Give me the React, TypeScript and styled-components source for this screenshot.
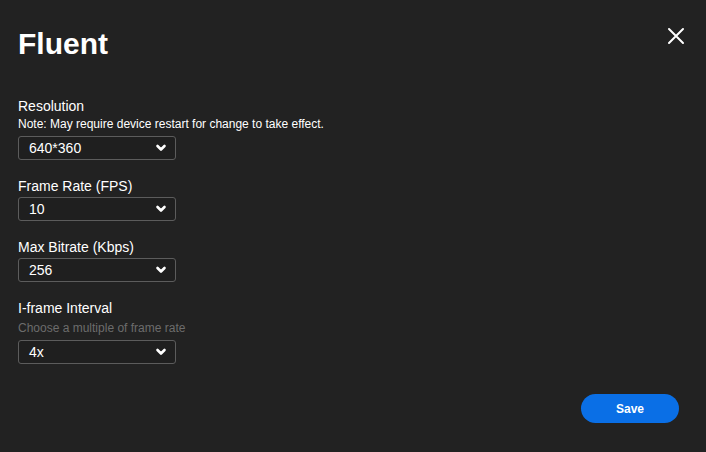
import { FC } from "react";
import styled, { createGlobalStyle } from "styled-components";

const GlobalStyle = createGlobalStyle`
  html, body {
    margin: 0;
    padding: 0;
    background-color: #222222;
  }
  body {
    font-family: "Liberation Sans", Arial, sans-serif;
    color: white;
  }
`;

const Dialog = styled.div`
  position: relative;
  width: 706px;
  height: 452px;
  box-sizing: border-box;
  padding: 26px 27px 0 18px;
  display: flex;
  flex-direction: column;
`;

const Title = styled.h1`
  margin: 0;
  font-size: 30px;
  line-height: 36px;
  font-weight: bold;
`;

const CloseButton = styled.button`
  position: absolute;
  top: 26px;
  right: 20px;
  width: 20px;
  height: 20px;
  padding: 0;
  background: none;
  border: none;
  display: flex;
  align-items: center;
  justify-content: center;
  cursor: pointer;
`;

const Form = styled.div`
  margin-top: 36px;
  display: flex;
  flex-direction: column;
  gap: 18px;
`;

const Field = styled.div`
  display: flex;
  flex-direction: column;
`;

const Label = styled.div`
  font-size: 14px;
  line-height: 16px;
  margin-bottom: 3px;
`;

const Hint = styled.div<{ $muted?: boolean }>`
  font-size: 12px;
  line-height: 14px;
  margin-top: ${(p) => (p.$muted ? "2px" : "0")};
  margin-bottom: 5px;
  color: ${(p) => (p.$muted ? "#6c6c6c" : "#ffffff")};
`;

const Select = styled.div`
  width: 158px;
  height: 24px;
  box-sizing: border-box;
  border: 1px solid #5c5c5c;
  border-radius: 3px;
  background-color: #1f1f1f;
  display: flex;
  align-items: center;
  justify-content: space-between;
  padding: 0 8px 0 10px;
  font-size: 14px;
`;

const Footer = styled.div`
  margin-top: 30px;
  display: flex;
  justify-content: flex-end;
`;

const SaveButton = styled.button`
  width: 98px;
  height: 29px;
  border: none;
  border-radius: 15px;
  background-color: #0a6fe6;
  color: white;
  font-family: "Liberation Sans", Arial, sans-serif;
  font-weight: bold;
  font-size: 12px;
  cursor: pointer;
`;

const Chevron = () => (
  <svg width="12" height="8" viewBox="0 0 12 8">
    <polyline
      points="2.5,2 6,5.5 9.5,2"
      fill="none"
      stroke="white"
      strokeWidth="2.6"
      strokeLinecap="round"
      strokeLinejoin="round"
    />
  </svg>
);

const Dropdown: FC<{ value: string }> = ({ value }) => (
  <Select>
    <span>{value}</span>
    <Chevron />
  </Select>
);

export default function App() {
  return (
    <>
      <GlobalStyle />
      <Dialog>
        <Title>Fluent</Title>
        <CloseButton type="button">
          <svg width="18" height="18" viewBox="0 0 18 18">
            <path d="M2 2 L16 16 M16 2 L2 16" stroke="white" strokeWidth="2" strokeLinecap="round" />
          </svg>
        </CloseButton>

        <Form>
          <Field>
            <Label>Resolution</Label>
            <Hint>Note: May require device restart for change to take effect.</Hint>
            <Dropdown value="640*360" />
          </Field>
          <Field>
            <Label>Frame Rate (FPS)</Label>
            <Dropdown value="10" />
          </Field>
          <Field>
            <Label>Max Bitrate (Kbps)</Label>
            <Dropdown value="256" />
          </Field>
          <Field>
            <Label>I-frame Interval</Label>
            <Hint $muted>Choose a multiple of frame rate</Hint>
            <Dropdown value="4x" />
          </Field>
        </Form>

        <Footer>
          <SaveButton type="button">Save</SaveButton>
        </Footer>
      </Dialog>
    </>
  );
}
